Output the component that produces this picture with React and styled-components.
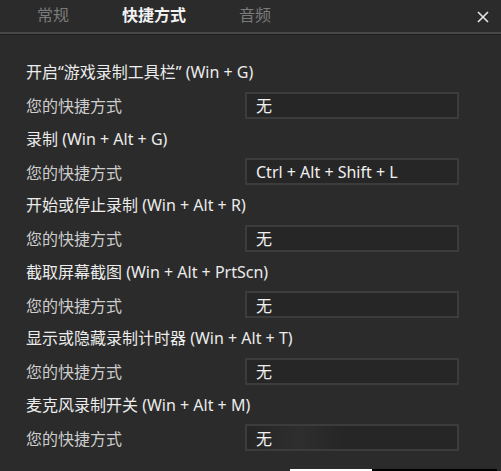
import React from "react";
import styled, { createGlobalStyle } from "styled-components";

const GlobalStyle = createGlobalStyle`
  html, body {
    margin: 0;
    padding: 0;
    background: #2b2b2b;
  }
  body {
    font-family: "Noto Sans", "Noto Sans CJK SC", sans-serif;
  }
`;

const shortcuts = [
  { title: "开启“游戏录制工具栏” (Win + G)", value: "无" },
  { title: "录制 (Win + Alt + G)", value: "Ctrl + Alt + Shift + L" },
  { title: "开始或停止录制 (Win + Alt + R)", value: "无" },
  { title: "截取屏幕截图 (Win + Alt + PrtScn)", value: "无" },
  { title: "显示或隐藏录制计时器 (Win + Alt + T)", value: "无" },
  { title: "麦克风录制开关 (Win + Alt + M)", value: "无", fade: true },
];

function App() {
  return (
    <Wrapper>
      <GlobalStyle />
      <TabBar>
        <Tabs>
          <Tab>常规</Tab>
          <Tab active>快捷方式</Tab>
          <Tab>音频</Tab>
        </Tabs>
        <Close aria-label="close">
          <svg width="12" height="12" viewBox="0 0 12 12">
            <path d="M1 1 L11 11 M11 1 L1 11" stroke="#e6e6e6" strokeWidth="1.6" />
          </svg>
        </Close>
      </TabBar>
      <Content>
        {shortcuts.map((s) => (
          <Section key={s.title}>
            <Title>{s.title}</Title>
            <Row>
              <Label>您的快捷方式</Label>
              <KeyBox fade={s.fade}>{s.value}</KeyBox>
            </Row>
          </Section>
        ))}
      </Content>
      <Strip>
        <span className="gap" />
        <span className="white" />
        <span className="black" />
      </Strip>
    </Wrapper>
  );
}

const Wrapper = styled.div`
  width: 501px;
  height: 471px;
  display: flex;
  flex-direction: column;
  background: #2b2b2b;
  overflow: hidden;
`;

const TabBar = styled.div`
  height: 32px;
  display: flex;
  align-items: center;
  justify-content: space-between;
  border-bottom: 2px solid #484848;
  box-shadow: 0 1px 0 #1e1e1e;
  padding: 0 11px 0 37px;
`;

const Tabs = styled.div`
  display: flex;
  gap: 53px;
  margin-top: -2px;
`;

const Tab = styled.span`
  font-size: 16px;
  line-height: 20px;
  color: ${({ active }) => (active ? "#f2f2f2" : "#7a7a7a")};
  font-weight: ${({ active }) => (active ? 600 : 400)};
`;

const Close = styled.span`
  display: flex;
  width: 14px;
  height: 14px;
  align-items: center;
  justify-content: center;
  margin-top: 2px;
`;

const Content = styled.div`
  flex: 1;
  display: flex;
  flex-direction: column;
  gap: 10.1px;
  padding: 28px 42px 0 26px;
`;

const Section = styled.div`
  display: flex;
  flex-direction: column;
  gap: 8.5px;
`;

const Title = styled.div`
  font-size: 16px;
  line-height: 21px;
  color: #ececec;
  white-space: nowrap;
`;

const Row = styled.div`
  display: flex;
  align-items: center;
  justify-content: space-between;
`;

const Label = styled.span`
  font-size: 16px;
  color: #cdcdcd;
`;

const KeyBox = styled.div`
  box-sizing: border-box;
  width: 214px;
  height: 27px;
  padding: 0 9px;
  display: flex;
  align-items: center;
  font-size: 16px;
  color: #f0f0f0;
  background: ${({ fade }) =>
    fade
      ? "linear-gradient(90deg, #262626 0%, #2e2e2e 25%, #262626 45%, #262626 100%)"
      : "#262626"};
  border: 2px solid #3c3c3c;
`;

const Strip = styled.div`
  height: 2px;
  display: flex;
  .gap {
    width: 290px;
  }
  .white {
    width: 82px;
    background: #ffffff;
  }
  .black {
    width: 125px;
    background: #000000;
  }
`;

export default App;
